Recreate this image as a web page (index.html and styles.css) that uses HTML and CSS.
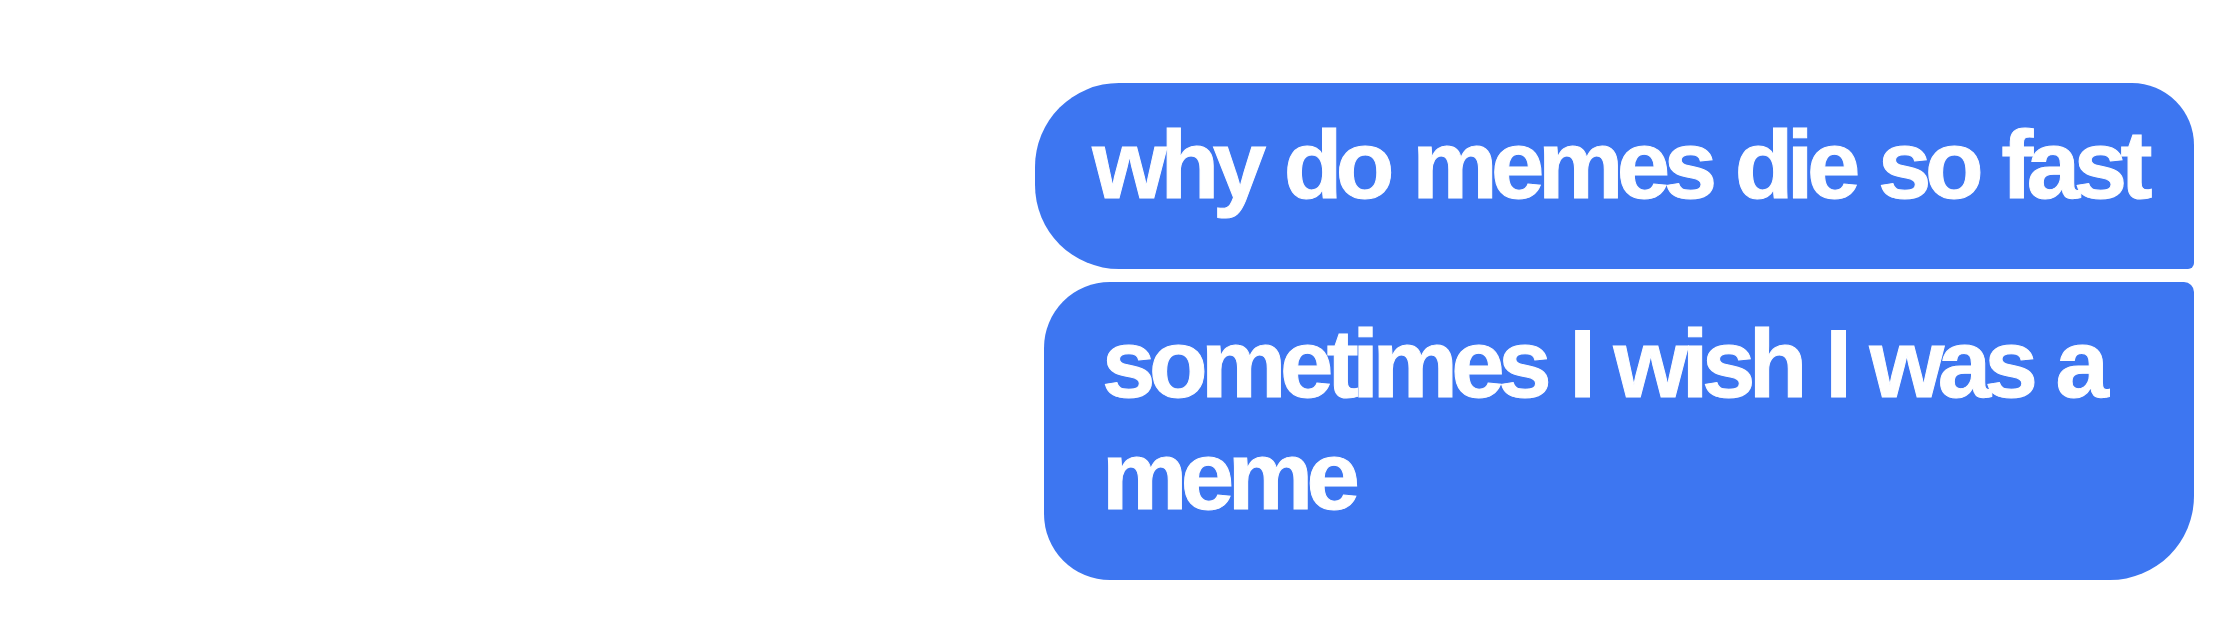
FILE: index.html
```html
<!DOCTYPE html>
<html lang="en">
<head>
    <meta charset="UTF-8">
    <meta name="viewport" content="width=device-width, initial-scale=1.0">
    <title>Messages</title>
    <link rel="stylesheet" href="styles.css">
</head>
<body>
    <div class="thread">
        <div class="group">
            <div class="bubble bubble-first">why do memes die so fast</div>
            <div class="bubble bubble-last">sometimes I wish I was a meme</div>
        </div>
    </div>
</body>
</html>
```

FILE: styles.css
```css
body {
    margin: 0;
    background: #ffffff;
    font-family: "Liberation Sans", Arial, sans-serif;
}
.thread {
    padding: 83px 24px 0 0;
}
.group {
    display: flex;
    flex-direction: column;
    align-items: flex-end;
    gap: 13px;
}
.bubble {
    box-sizing: border-box;
    background-color: #3d76f1;
    color: #ffffff;
    font-size: 96px;
    font-weight: bold;
    letter-spacing: -6.5px;
    word-spacing: 4px;
    line-height: 112px;
    -webkit-text-stroke: 1px #ffffff;
    padding: 26px 48px 48px 57px;
}
.bubble-first {
    border-radius: 84px 62px 6px 84px;
}
.bubble-last {
    max-width: 1150px;
    padding-left: 58px;
    border-radius: 66px 10px 84px 66px;
}
```
